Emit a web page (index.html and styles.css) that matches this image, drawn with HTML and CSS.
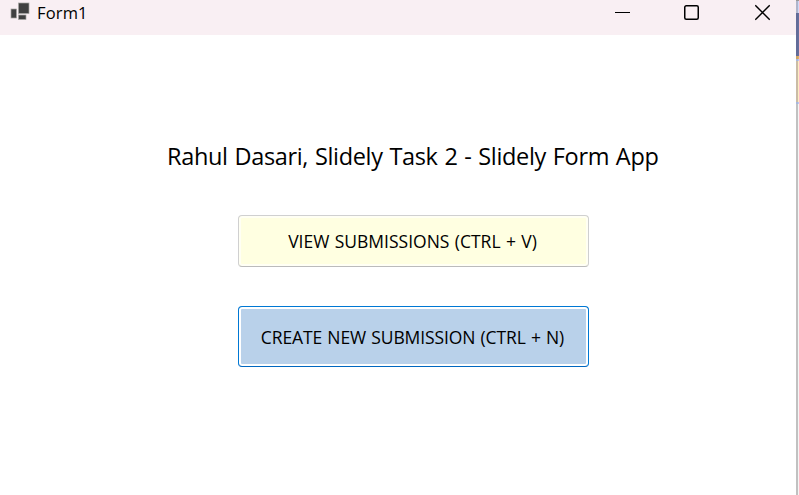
FILE: index.html
```html
<!DOCTYPE html>
<html lang="en">
<head>
<meta charset="utf-8">
<title>Form1</title>
<link rel="stylesheet" href="styles.css">
</head>
<body>
<div class="desktop">
  <div class="window">
    <header class="titlebar">
      <svg class="app-icon" width="20" height="18" viewBox="0 0 20 18">
        <g fill="#404040" stroke="#a5a5a2" stroke-width=".7">
          <rect x="8.5" y="1" width="10.5" height="10.5"/>
          <rect x="1" y="7" width="5.5" height="9"/>
          <rect x="8.5" y="13" width="7.5" height="4.5"/>
        </g>
      </svg>
      <span class="caption">Form1</span>
      <div class="controls">
        <svg width="15" height="17" viewBox="0 0 15 17"><path d="M0 8.5H15" stroke="#000"/></svg>
        <svg class="maximize" width="15" height="17" viewBox="0 0 15 17"><rect x=".75" y="1.75" width="13.5" height="13.5" rx="1.5" fill="none" stroke="#000" stroke-width="1.5"/></svg>
        <svg width="15" height="17" viewBox="0 0 15 17"><path d="M.3 1.3L14.7 15.7M14.7 1.3L.3 15.7" fill="none" stroke="#000" stroke-width="1.3"/></svg>
      </div>
    </header>
    <main class="form">
      <h1 class="heading">Rahul Dasari, Slidely Task 2 - Slidely Form App</h1>
      <button class="btn view"><span class="view-label">VIEW SUBMISSIONS (CTRL + V)</span></button>
      <button class="btn create"><span class="create-label">CREATE NEW SUBMISSION (CTRL + N)</span></button>
    </main>
  </div>
  <div class="backdrop"></div>
</div>
</body>
</html>
```
FILE: styles.css
```css
* { box-sizing: border-box; }
body {
  margin: 0;
  overflow: hidden;
  background: #fff;
  color: #000;
  font-family: "Open Sans", "Noto Sans", sans-serif;
}
.desktop { display: flex; width: 799px; height: 495px; }
.window { width: 796px; display: flex; flex-direction: column; }
.titlebar {
  height: 35px;
  display: flex;
  align-items: flex-start;
  padding: 2px 26px 0 10px;
  background: #f9eff3;
}
.app-icon { margin-right: 7px; }
.caption { font-size: 16.5px; line-height: 22px; letter-spacing: .15px; white-space: nowrap; }
.controls { display: flex; gap: 55px; margin: 2px 0 0 auto; }
.maximize { margin: 0 1px 0 -1px; }
.form { display: flex; flex-direction: column; align-items: flex-start; flex: 1; }
.heading {
  margin: 103px 0 0 167px;
  font-size: 23.5px;
  line-height: 36px;
  font-weight: 400;
  letter-spacing: -.33px;
  word-spacing: 1px;
  white-space: nowrap;
}
.btn {
  width: 351px;
  margin-left: 238px;
  padding: 0;
  border: 1px solid #d0d0d0;
  border-radius: 4px;
  font: 17.5px "Open Sans", "Noto Sans", sans-serif;
  color: #000;
  white-space: nowrap;
}
.view {
  height: 52px;
  margin-top: 41px;
  padding-right: 2px;
  border-bottom-color: #bbb;
  background: #ffffe1;
  box-shadow: inset 0 0 0 2px #fffff4;
  word-spacing: .8px;
}
.create {
  height: 61px;
  margin-top: 39px;
  padding-right: 2px;
  border-color: #0078d4;
  border-bottom-color: #0067c0;
  background: #b9d1ea;
  box-shadow: inset 0 0 0 2px #fff;
  letter-spacing: -.1px;
  word-spacing: .7px;
}
.backdrop {
  width: 3px;
  background:
    linear-gradient(#999 0 1px, #b0b5cb 1px 13px, #626b98 13px 56px, #d0a463 56px 59px, #a9b7db 59px 61px, #cbbca6 61px 102px, #a9b7db 102px 104px, #c1c1c1 104px) 0 0 / 2px 100% no-repeat,
    linear-gradient(#999 0 1px, #cdd7f7 1px 13px, #65709d 13px 56px, #dfb268 56px 59px, #bacaf4 59px 61px, #fdecc2 61px 102px, #bacaf4 102px 104px, #f5f5f5 104px);
}
```
